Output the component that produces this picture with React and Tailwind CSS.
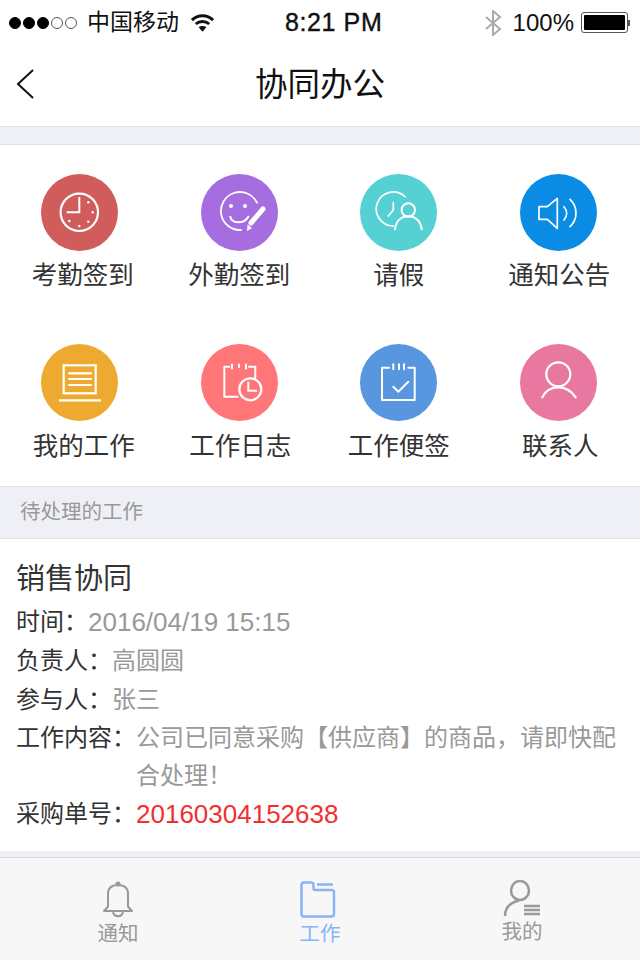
const font = { fontFamily: '"Liberation Sans", "Noto Sans CJK SC", sans-serif' }

const Circle = ({ color, children }) => (
    <div className={`w-[77px] h-[77px] rounded-full flex items-center justify-center ${color}`}>
        <svg width="77" height="77" viewBox="0 0 77 77" fill="none" stroke="white" strokeWidth="2" strokeLinecap="round" strokeLinejoin="round">
            {children}
        </svg>
    </div>
)

const ClockIcon = () => (
    <>
        <circle cx="38.3" cy="38.3" r="18.7" strokeWidth="2.2" />
        <path d="M38.3 23v15.300H25.700" strokeWidth="2" strokeLinecap="butt" strokeLinejoin="miter" />
        <g fill="white" stroke="none">
            <circle cx="47.300" cy="28.300" r="1.200" /><circle cx="51.700" cy="38.300" r="1.200" /><circle cx="47.300" cy="47.700" r="1.200" />
            <circle cx="38.300" cy="52" r="1.200" /><circle cx="28.300" cy="47" r="1.200" />
        </g>
    </>
)
const SmileIcon = () => (
    <>
        <path d="M56 28.700A19 19 0 1 0 40 56" strokeWidth="1.800" />
        <circle cx="30" cy="32" r="2" fill="white" stroke="none" />
        <circle cx="44" cy="32" r="2" fill="white" stroke="none" />
        <path d="M29.300 42.700c2 7.500 14 7.500 18 0" strokeWidth="2" />
        <path d="M50 49l12-14" strokeWidth="5" />
        <path d="M46.500 50.500l4.500 3.500-5 3z" fill="white" stroke="none" />
    </>
)
const LeaveIcon = () => (
    <>
        <path d="M45 22.700A17 17 0 1 0 33.300 52" strokeWidth="1.700" />
        <path d="M33.300 28.700V36l-5 6" strokeWidth="1.700" />
        <circle cx="48.300" cy="36" r="6.700" />
        <path d="M35 55.300c1-8 6-13 13.300-13s12.400 5 13.400 13" />
    </>
)
const SpeakerIcon = () => (
    <>
        <path d="M19 32.700h8.300l10-8.400v30l-10-9H19z" strokeWidth="1.700" />
        <path d="M44 32.700c3.500 4 3.500 9.300 0 13.300" strokeWidth="1.700" />
        <path d="M50 25.300c8 7.500 8 20 0 27.400" strokeWidth="1.700" />
    </>
)
const BookIcon = () => (
    <>
        <rect x="22.700" y="21.300" width="32" height="28" strokeWidth="2.200" strokeLinecap="butt" strokeLinejoin="miter" />
        <path d="M27.300 29.300h23.400M27.300 35h23.400M27.300 41h23.400" strokeWidth="2.200" strokeLinecap="butt" />
        <path d="M18 56.300h42" strokeWidth="2.200" strokeLinecap="butt" />
    </>
)
const DiaryIcon = () => (
    <>
        <path d="M28.300 22.700h-5v30h13.400" strokeWidth="2" />
        <path d="M31 20.500v4M38 20.500v2.500M45 20.500v4M48 22.700h6.300v11.600" strokeWidth="2" />
        <circle cx="49.300" cy="45.300" r="11" strokeWidth="2.200" />
        <path d="M47.300 37.700v9H56" strokeWidth="2" strokeLinecap="butt" strokeLinejoin="miter" />
    </>
)
const NoteIcon = () => (
    <>
        <path d="M29 23.700h-7V56h32.700V23.700h-6.400" strokeWidth="2" />
        <path d="M33.300 20.300v5M39 20.300v5M44 20.300v5" strokeWidth="2" />
        <path d="M33.300 42.700l5 5 10-10" strokeWidth="2" />
    </>
)
const PersonIcon = () => (
    <>
        <circle cx="38.300" cy="30.300" r="12" strokeWidth="2.200" />
        <path d="M22.300 53.300c3-6.500 8.500-10 16-10s13 3.500 17.400 10" strokeWidth="2.200" />
    </>
)

const apps = [
    { label: '考勤签到', color: 'bg-[#d15c5c]', icon: <ClockIcon />, nudge: 'ml-[6px]' },
    { label: '外勤签到', color: 'bg-[#a56de0]', icon: <SmileIcon />, nudge: '' },
    { label: '请假', color: 'bg-[#55d0d3]', icon: <LeaveIcon />, nudge: '' },
    { label: '通知公告', color: 'bg-[#0a8ce5]', icon: <SpeakerIcon />, nudge: 'ml-[2px]' },
    { label: '我的工作', color: 'bg-[#eeaa30]', icon: <BookIcon />, nudge: 'ml-[8px]' },
    { label: '工作日志', color: 'bg-[#ff7679]', icon: <DiaryIcon />, nudge: 'ml-[2px]' },
    { label: '工作便签', color: 'bg-[#5896e0]', icon: <NoteIcon />, nudge: '' },
    { label: '联系人', color: 'bg-[#e8789f]', icon: <PersonIcon />, nudge: 'ml-[4px]' },
]

const Row = ({ label, children }) => (
    <div className="flex text-[24px] leading-[38.25px]">
        <span className="text-[#333] whitespace-nowrap">{label}</span>
        <span className="flex-1 text-[#999]">{children}</span>
    </div>
)

const StatusBar = () => (
    <div className="relative h-[45px] flex items-center justify-between pl-[9px] pr-[10px] text-[#111]">
        <div className="flex items-center">
            <div className="flex gap-[2px] mr-[10px]">
                {[1, 1, 1, 0, 0].map((on, i) => (
                    <span key={i} className={`w-[12px] h-[12px] rounded-full border ${on ? 'bg-black border-black' : 'border-[#555]'}`} />
                ))}
            </div>
            <span className="text-[23px]">中国移动</span>
            <svg className="ml-[11px]" width="25" height="20" viewBox="0 0 26 20" fill="none" stroke="#111" strokeWidth="3">
                <path d="M2 7c6-6 16-6 22 0M6 11c4-3.500 10-3.500 14 0" />
                <path d="M13 19l-4-4.500c2-2 6-2 8 0z" fill="#111" stroke="none" />
            </svg>
        </div>
        <span className="text-[25px] absolute left-[285px] tracking-[0.6px] [-webkit-text-stroke:0.4px_#111]">8:21 PM</span>
        <div className="flex items-center">
            <svg width="18" height="26" viewBox="0 0 18 26" fill="none" stroke="#aaa" strokeWidth="2">
                <path d="M2 7l14 12-7 6V1l7 6L2 19" />
            </svg>
            <span className="text-[24px] ml-[11px] mr-[7px]">100%</span>
            <div className="w-[47px] h-[21px] border border-[#555] rounded-[3px] p-[2px]">
                <div className="w-full h-full bg-black rounded-[1px]" />
            </div>
            <div className="w-[2px] h-[6px] bg-[#555]" />
        </div>
    </div>
)

const TabItem = ({ label, active, icon, className = '' }) => (
    <div className={`w-[202px] flex flex-col items-center ${className}`}>
        {icon}
        <span className={`text-[20.5px] leading-[26px] ${active ? 'text-[#86b4f7]' : 'text-[#999]'}`}>{label}</span>
    </div>
)

const App = () => {
    return (
        <div style={font} className="relative w-[640px] h-[960px] bg-white overflow-hidden">
            <StatusBar />
            <div className="relative h-[82px] flex items-center justify-center border-b border-[#e2e3e8]">
                <svg className="absolute left-[15px] top-[23px]" width="20" height="32" viewBox="0 0 20 32" fill="none" stroke="#111" strokeWidth="2">
                    <path d="M18 2L3 16l15 14" />
                </svg>
                <span className="text-[32.5px] text-[#111]">协同办公</span>
            </div>
            <div className="h-[18px] bg-[#eff0f5] border-b border-[#e2e3e8]" />

            <div className="grid grid-cols-4 pr-[2px] h-[342px] border-b border-[#e2e3e8]">
                {apps.map((app, i) => (
                    <div key={app.label} className={`flex flex-col items-center ${i < 4 ? 'pt-[29px]' : 'pt-[28px]'}`}>
                        <Circle color={app.color}>{app.icon}</Circle>
                        <span className={`text-[25.5px] leading-[36px] text-[#333] ${app.nudge} ${i < 4 ? 'mt-[6px]' : 'mt-[7px]'}`}>{app.label}</span>
                    </div>
                ))}
            </div>

            <div className="h-[52px] bg-[#eff0f5] border-b border-[#e2e3e8] flex items-center pl-[20px] text-[20.5px] text-[#999]">
                待处理的工作
            </div>

            <div className="pl-[16px] pr-[20px] pt-[20px] h-[312px]">
                <div className="text-[29px] leading-[40px] text-[#333] mb-[4px]">销售协同</div>
                <Row label="时间："><span className="text-[26px]">2016/04/19 15:15</span></Row>
                <Row label="负责人：">高圆圆</Row>
                <Row label="参与人：">张三</Row>
                <Row label="工作内容：">公司已同意采购【供应商】的商品，请即快配合处理！</Row>
                <div className="flex text-[24px] leading-[38.25px]">
                    <span className="text-[#333]">采购单号：</span>
                    <span className="text-[#f22f2f] text-[26px]">20160304152638</span>
                </div>
            </div>

            <div className="h-[7px] bg-[#eff0f5] border-b border-[#d9dae0]" />

            <div className="h-[102px] bg-[#f7f7f7] flex pl-[17px]">
                <TabItem
                    label="通知"
                    className="pt-[23px]"
                    icon={
                        <svg className="mb-[3px]" width="32" height="37" viewBox="0 0 32 37" fill="none" stroke="#999" strokeWidth="2" strokeLinejoin="round">
                            <path d="M2 30l4-4.500V13c0-6 4-9 10-9s10 3 10 9v12.500l4 4.500z" />
                            <circle cx="16" cy="3" r="2.500" fill="#999" stroke="none" />
                            <path d="M11 31c1 5.500 9 5.500 10 0" />
                        </svg>
                    }
                />
                <TabItem
                    label="工作"
                    active
                    className="pt-[23px]"
                    icon={
                        <svg className="mb-[3px] mr-[4px]" width="36" height="37" viewBox="0 0 36 37" fill="none" stroke="#86b4f7" strokeWidth="2.500" strokeLinejoin="round">
                            <path d="M1.500 4c0-1.500 1-2.500 2.500-2.500h7c1.500 0 2.500 1 2.500 2.500v3c0 1 .500 2 1.500 2h17c1 0 2 1 2 2v22c0 1.500-1 2.500-2.500 2.500H4C2.500 35.500 1.500 34.500 1.500 33z" />
                            <path d="M17 3.500h16" />
                        </svg>
                    }
                />
                <TabItem
                    label="我的"
                    className="pt-[22px]"
                    icon={
                        <svg className="mb-[2px]" width="38" height="37" viewBox="0 0 38 37" fill="none" stroke="#999" strokeWidth="2.500">
                            <ellipse cx="17" cy="10.500" rx="9" ry="9.500" />
                            <path d="M2 36c0-8 4-13 14-15.500" />
                            <path d="M21 26h16M21 30h16M21 34h16" />
                        </svg>
                    }
                />
            </div>
        </div>
    )
}

export default App
